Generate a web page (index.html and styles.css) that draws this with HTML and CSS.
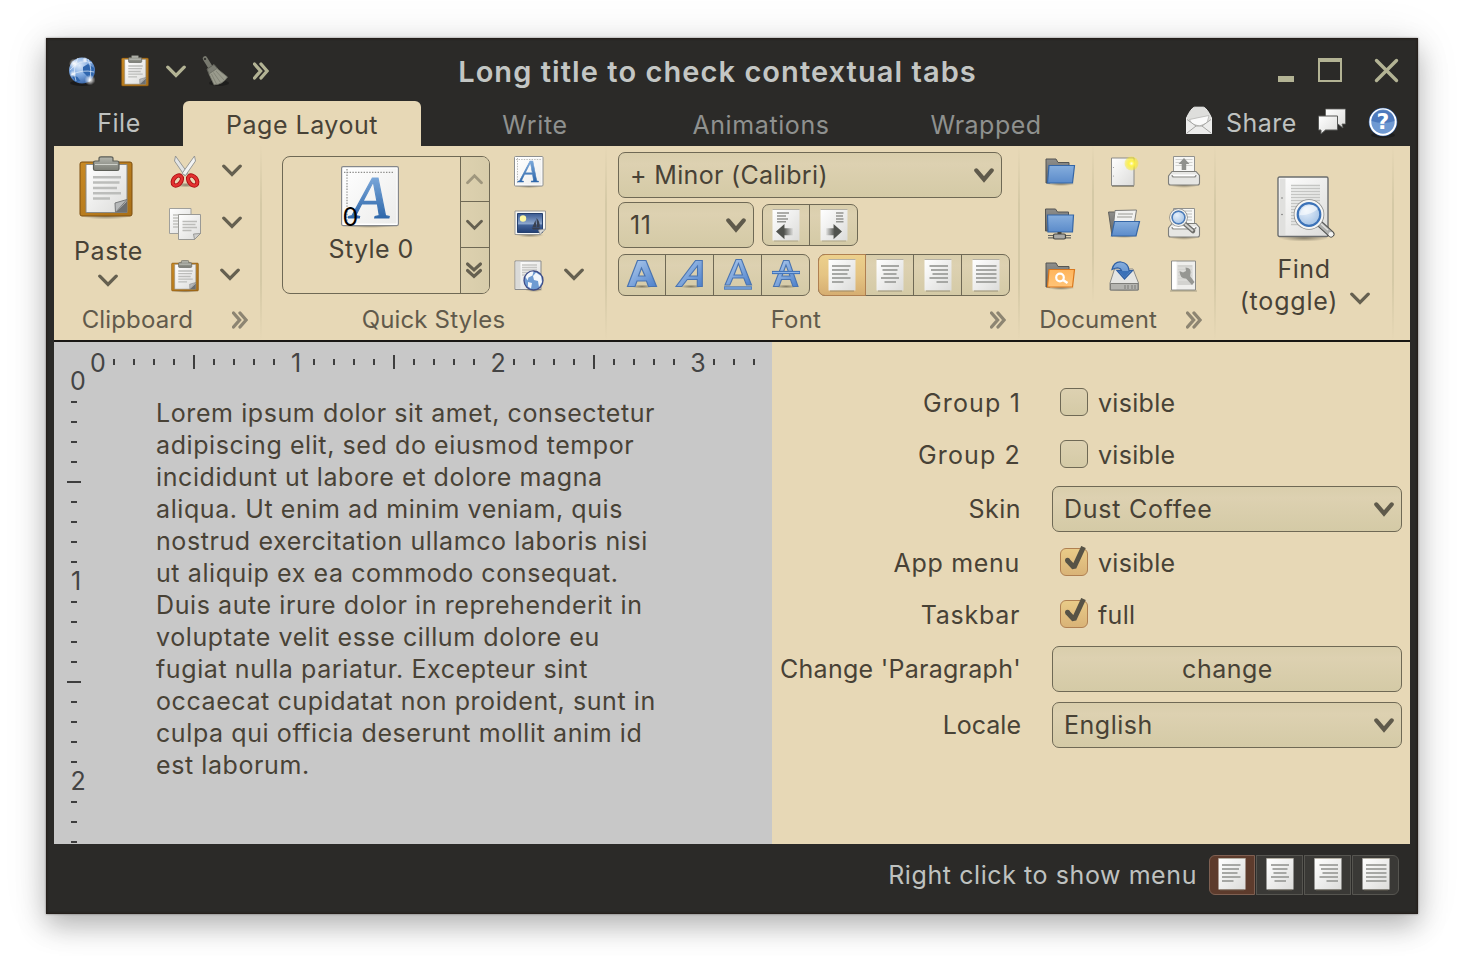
FILE: index.html
```html
<!DOCTYPE html>
<html lang="en">
<head>
<meta charset="utf-8">
<title>Long title to check contextual tabs</title>
<link rel="stylesheet" href="styles.css">
</head>
<body>
<svg class="defs" width="0" height="0" aria-hidden="true">
  <defs>
    <linearGradient id="gPaper" x1="0" y1="0" x2="1" y2="1"><stop offset="0" stop-color="#fff"/><stop offset="1" stop-color="#dcdcda"/></linearGradient>
    <linearGradient id="gWood" x1="0" y1="0" x2="1" y2="1"><stop offset="0" stop-color="#c98a24"/><stop offset="1" stop-color="#a86f18"/></linearGradient>
    <linearGradient id="gMetal" x1="0" y1="0" x2="0" y2="1"><stop offset="0" stop-color="#b4b6ae"/><stop offset="1" stop-color="#7c7e76"/></linearGradient>
    <linearGradient id="gBlue" x1="0" y1="0" x2="0" y2="1"><stop offset="0" stop-color="#86aedd"/><stop offset="1" stop-color="#5b8bca"/></linearGradient>
    <linearGradient id="gOrange" x1="0" y1="0" x2="0" y2="1"><stop offset="0" stop-color="#ffb55c"/><stop offset="1" stop-color="#ffc477"/></linearGradient>
    <linearGradient id="gGray" x1="0" y1="0" x2="0" y2="1"><stop offset="0" stop-color="#8e8e8b"/><stop offset="1" stop-color="#626260"/></linearGradient>
    <linearGradient id="gFontA" x1="0" y1="0" x2="1" y2="1"><stop offset="0" stop-color="#b5cfee"/><stop offset="1" stop-color="#4c80cb"/></linearGradient>
    <linearGradient id="gSea" x1="0" y1="0" x2="0" y2="1"><stop offset="0" stop-color="#3a5a92"/><stop offset=".55" stop-color="#8fa9cf"/><stop offset=".6" stop-color="#44659b"/><stop offset="1" stop-color="#233f74"/></linearGradient>
    <linearGradient id="gFadeL" x1="0" y1="0" x2="1" y2="0"><stop offset=".45" stop-color="#50524d"/><stop offset="1" stop-color="#50524d" stop-opacity="0"/></linearGradient>
    <linearGradient id="gFadeR" x1="0" y1="0" x2="1" y2="0"><stop offset="0" stop-color="#50524d" stop-opacity="0"/><stop offset=".55" stop-color="#50524d"/></linearGradient>
    <radialGradient id="gGlobe" cx=".4" cy=".3" r=".8"><stop offset="0" stop-color="#dbe9fa"/><stop offset=".5" stop-color="#7ba6de"/><stop offset="1" stop-color="#2a579c"/></radialGradient>
    <radialGradient id="gSun"><stop offset="0" stop-color="#fffde0"/><stop offset=".35" stop-color="#fff34a"/><stop offset="1" stop-color="#f7e81a" stop-opacity=".35"/></radialGradient>
    <radialGradient id="gGlow"><stop offset="0" stop-color="#fff"/><stop offset="1" stop-color="#fff" stop-opacity="0"/></radialGradient>
    <radialGradient id="gShade"><stop offset="0" stop-color="#3b382c" stop-opacity=".55"/><stop offset="1" stop-color="#3b382c" stop-opacity="0"/></radialGradient>
    <radialGradient id="gLens" cx=".4" cy=".35" r=".7"><stop offset="0" stop-color="#e7f0fa"/><stop offset="1" stop-color="#9bbce2"/></radialGradient>

    <symbol id="down" viewBox="0 0 20 13"><path d="M1.800 2.200 10 10.400 18.200 2.200" fill="none" stroke="currentColor" stroke-width="3.300" stroke-linecap="round"/></symbol>
    <symbol id="down-bold" viewBox="0 0 20 15"><path d="M2.300 2.400 10 11.400 17.700 2.400" fill="none" stroke="currentColor" stroke-width="4.200" stroke-linecap="round"/></symbol>
    <symbol id="more" viewBox="0 0 16 18"><path d="M1.500 2 7.600 9 1.500 16M8 2l6.100 7L8 16" fill="none" stroke="currentColor" stroke-width="3.300" stroke-linecap="round"/></symbol>

    <symbol id="clipboard" viewBox="0 0 54 64">
      <ellipse cx="27" cy="60" rx="25" ry="3.500" fill="url(#gShade)"/>
      <rect x="1" y="6" width="52" height="54" rx="2" fill="url(#gWood)" stroke="#7c4e10"/>
      <path d="M7 8.500h41v48H7z" fill="url(#gPaper)" stroke="#8a8a86"/>
      <path d="M48 45v11.500H36.500z" fill="#6d6f70"/><path d="M36.500 56.500 36 47l12-3.500z" fill="#b7b9ba" stroke="#77797a"/>
      <path d="M14 21.300h28M14 26.600h26.500M14 32h24M14 37.200h28M14 42.500h17" stroke="#bcbdbb" stroke-width="2.500"/>
      <path d="M20 5V2.500Q20 .8 22 .8h10q2 0 2 1.700V5h4q2 0 2 2v6q0 1.500-2 1.500H16.500q-2 0-2-1.500V7q0-2 2-2z" fill="url(#gMetal)" stroke="#5c5e57" stroke-width="1.200"/>
      <path d="M16 8.500h22.500" stroke="#cfd1ca" stroke-width="1"/>
    </symbol>

    <symbol id="globe" viewBox="0 0 32 32">
      <ellipse cx="16" cy="28" rx="12" ry="3" fill="#111" opacity=".6"/>
      <circle cx="16" cy="15.500" r="13" fill="url(#gGlobe)"/>
      <path d="M17 12l5-3 6 4-1 8-5 1-5-5z" fill="#2f66ae"/><path d="M5.500 20l6 2 3 4-5 1z" fill="#2f66ae"/>
      <path d="M4 15Q14 3 26 8M5 20Q16 14 28 17M12 3Q6 14 10 26M22 4Q27 14 23 27" fill="none" stroke="#e2edf9" stroke-width=".9" opacity=".8"/>
      <circle cx="8" cy="8.500" r="5" fill="url(#gGlow)"/><circle cx="7" cy="19" r="3.500" fill="url(#gGlow)"/><circle cx="24" cy="25" r="5.500" fill="url(#gGlow)"/><circle cx="19" cy="5" r="3" fill="url(#gGlow)"/>
    </symbol>

    <symbol id="broom" viewBox="0 0 28 32">
      <ellipse cx="18" cy="28" rx="10" ry="3" fill="#111" opacity=".5"/>
      <path d="M4 3.500 10.500 14" stroke="#77786e" stroke-width="4.600" stroke-linecap="round"/><circle cx="4" cy="4" r="1.100" fill="#292826"/>
      <path d="M6 14 13 9.500l3.500 4L8 19z" fill="#7d7e74" stroke="#5f6058"/>
      <path d="M8 19 16 13.500 26.500 22Q22 29.500 13 29.800Z" fill="#9a9b8d" stroke="#747569" stroke-width=".8"/>
      <path d="M10.500 19l5 10M12.500 17.500l7 10M15 16l8 9" stroke="#7c7d71" stroke-width=".8"/>
    </symbol>

    <symbol id="scissors" viewBox="0 0 30 34">
      <ellipse cx="16" cy="30" rx="10" ry="2.500" fill="url(#gShade)"/>
      <path d="M5.500 1 18 18.500l-3.500 2L4.500 6z" fill="#e3e5e5" stroke="#8d908f" stroke-width=".9"/>
      <path d="M24.500 1 12 18.500l3.500 2L25.500 6z" fill="#f2f3f3" stroke="#8d908f" stroke-width=".9"/>
      <ellipse cx="7.300" cy="25.500" rx="3.800" ry="5.600" transform="rotate(38 7.300 25.500)" fill="none" stroke="#a80f12" stroke-width="4.300"/>
      <ellipse cx="22.700" cy="25.500" rx="3.800" ry="5.600" transform="rotate(-38 22.700 25.500)" fill="none" stroke="#a80f12" stroke-width="4.300"/>
      <ellipse cx="7.300" cy="25.500" rx="3.800" ry="5.600" transform="rotate(38 7.300 25.500)" fill="none" stroke="#e33130" stroke-width="2.600"/>
      <ellipse cx="22.700" cy="25.500" rx="3.800" ry="5.600" transform="rotate(-38 22.700 25.500)" fill="none" stroke="#e33130" stroke-width="2.600"/>
    </symbol>

    <symbol id="copy" viewBox="0 0 32 32">
      <path d="M.5.500h21.500v25H.5z" fill="url(#gPaper)" stroke="#a0a09c"/>
      <path d="M4 7h14M4 10h14M4 13h14M4 16h14M4 19h14" stroke="#c2c2bf" stroke-width="1.600"/>
      <path d="M9.500 6.500h22v19l-6 6h-16z" fill="url(#gPaper)" stroke="#999995"/>
      <path d="M31.500 25.500l-7 .5 1 5.500z" fill="#cfcfcd" stroke="#8b8b88" stroke-width=".8"/>
      <path d="M13.500 13.500h14.500M13.500 16.500h13M13.500 19.500h14.500M13.500 22.500h9" stroke="#bcbcb9" stroke-width="1.500"/>
    </symbol>

    <symbol id="style" viewBox="0 0 58 62">
      <ellipse cx="29" cy="59.500" rx="27" ry="2.500" fill="url(#gShade)"/>
      <rect x=".6" y=".6" width="56.800" height="59" rx="1.500" fill="#fff" stroke="#85878a" stroke-width="1.200"/>
      <path d="M2.500 2.500h53v55h-53z" fill="url(#gPaper)" opacity=".55"/>
      <path d="M3 6.300h49M6 3v53" stroke="#8e8e8c" stroke-width="1.200" stroke-dasharray="1.400 1.400"/>
    </symbol>
    <symbol id="style-small" viewBox="0 0 30 32">
      <ellipse cx="15" cy="30.500" rx="14" ry="1.500" fill="url(#gShade)"/>
      <rect x=".5" y=".5" width="28.500" height="29.500" rx="1" fill="#fff" stroke="#8d8f90"/>
      <path d="M2 2h25.500v26.500H2z" fill="url(#gPaper)" opacity=".5"/>
      <path d="M2 3.500h25M3.500 2v25" stroke="#b9b9b6" stroke-dasharray="1.400 1.200"/>
    </symbol>

    <symbol id="picture" viewBox="0 0 32 28">
      <ellipse cx="16" cy="25" rx="14" ry="2.500" fill="url(#gShade)"/>
      <path d="M1 1h30.500v18l-5 5.500H1z" fill="#f7f7f5" stroke="#9a9a96"/>
      <path d="M3.500 3.500h25v19h-25z" fill="url(#gSea)" stroke="#26416f"/>
      <circle cx="9" cy="8.500" r="3.200" fill="#fdf7a2"/>
      <path d="M21.500 10l-3 7h4zM22.500 8q4 4 3 9h-2.500zM17.500 17.500h9l-1.500 2h-6z" fill="#3a4150"/>
      <path d="M31.500 19l-7 1 1.500 4.500z" fill="#d9d9d6" stroke="#979793" stroke-width=".7"/>
    </symbol>

    <symbol id="webdoc" viewBox="0 0 31 32">
      <path d="M1 1h26v28.500H1z" fill="url(#gPaper)" stroke="#8a8b8b"/><path d="M1.700 1.700h4.800v27H1.700z" fill="#dadad8"/>
      <path d="M8 5h15M8 7.500h15M8 10h15M8 12.500h10M8 15h6" stroke="#c6c6c4" stroke-width="1.400"/>
      <ellipse cx="20" cy="30" rx="9" ry="2" fill="url(#gShade)"/>
      <circle cx="19.500" cy="20.500" r="9.500" fill="#6f9bd2" stroke="#3f4c86" stroke-width="1.300"/>
      <path d="M11.500 17q3-6 8-5.500l-1 4-4 2-1 3zM22 12.500l5 3.500 1 6-3 5-1-6-4-1-1-4zM14 22l4 1-1 5.500-3-2z" fill="#f3f6fa"/>
    </symbol>

    <symbol id="outdent" viewBox="0 0 30 34">
      <path d="M1.500 1.500h27v31h-27z" fill="url(#gPaper)"/><path d="M1.500 1.500h27" stroke="#b4b0a4"/><path d="M3 33h24" stroke="#8a846f" opacity=".5"/>
      <path d="M6 5h12M6 8h9M6 11h11M6 13.700h9" stroke="#92938f" stroke-width="1.400"/>
      <path d="M5 23.500 13.500 16v4.300h9v7h-9v4z" fill="url(#gFadeL)"/>
    </symbol>
    <symbol id="indent" viewBox="0 0 30 34">
      <path d="M1.500 1.500h27v31h-27z" fill="url(#gPaper)"/><path d="M1.500 1.500h27" stroke="#b4b0a4"/><path d="M3 33h24" stroke="#8a846f" opacity=".5"/>
      <path d="M17 5h7.500M17 8h7M17 11h7.500M17 13.700h7.500" stroke="#92938f" stroke-width="1.400"/>
      <path d="M23 23.500 14.500 16v4.300h-8v7h8v4z" fill="url(#gFadeR)"/>
    </symbol>

    <symbol id="bold" viewBox="0 0 32 30">
      <ellipse cx="16" cy="27.500" rx="11" ry="2" fill="url(#gShade)"/>
      <path fill-rule="evenodd" d="M11.500 1.500h8.500l10.500 26h-8l-2-5.500H11l-2 5.500H1.500zM15.500 9l-3 8h6.500z" fill="url(#gFontA)" stroke="#4a74b0" stroke-width="1.200"/>
    </symbol>
    <symbol id="italic" viewBox="0 0 32 30">
      <ellipse cx="17" cy="27.500" rx="11" ry="2" fill="url(#gShade)"/>
      <path fill-rule="evenodd" d="M21.500 1.500h6.800v26h-5v-7h-10l-5.500 7H2zM23.500 7 15.500 17h8z" fill="url(#gFontA)" stroke="#4a74b0" stroke-width="1.100"/>
    </symbol>
    <symbol id="underline" viewBox="0 0 32 34">
      <path fill-rule="evenodd" d="M14 1.500h5.500l10 25.500H24.500l-2.700-7h-11l-3 7H3zM16.500 5.500l-4.500 11.500h8.500z" fill="url(#gFontA)" stroke="#4a74b0" stroke-width="1.100"/>
      <path d="M2 30h28" stroke="#386bb3" stroke-width="3.200"/><path d="M2.500 30h27" stroke="#8fb5e6" stroke-width="1.300"/>
    </symbol>
    <symbol id="strike" viewBox="0 0 32 30">
      <ellipse cx="16" cy="27.500" rx="11" ry="2" fill="url(#gShade)"/>
      <path fill-rule="evenodd" d="M13.500 1.500h5.500l9 26h-5l-2.500-7h-9l-2.500 7H3.500zM16 6l-4 11h8z" fill="url(#gFontA)" stroke="#4a74b0" stroke-width="1.100"/>
      <path d="M2 13.500h28" stroke="#386bb3" stroke-width="3.200"/><path d="M2.500 13.500h27" stroke="#8fb5e6" stroke-width="1.300"/>
    </symbol>

    <symbol id="page" viewBox="0 0 30 34">
      <path d="M1.500 1.500h27v31h-27z" fill="url(#gPaper)"/><path d="M1.500 1.500h27" stroke="#b4b0a4"/><path d="M3 33h24" stroke="#77715e" opacity=".6"/>
    </symbol>
    <symbol id="left" viewBox="0 0 30 34"><use href="#page" width="30" height="34"/><path d="M5 8h18.500M5 12h17M5 16h15.500M5 20h18.500M5 24h11.500" stroke="#a6a7a4" stroke-width="1.800"/></symbol>
    <symbol id="center" viewBox="0 0 30 34"><use href="#page" width="30" height="34"/><path d="M6 8h18M7.500 12h15M8.500 16h13M6 20h18M9.500 24h11.500" stroke="#a6a7a4" stroke-width="1.800"/></symbol>
    <symbol id="right" viewBox="0 0 30 34"><use href="#page" width="30" height="34"/><path d="M6.500 8H25M8 12h17M9.500 16H25M6.500 20H25M13.500 24H25" stroke="#a6a7a4" stroke-width="1.800"/></symbol>
    <symbol id="justify" viewBox="0 0 30 34"><use href="#page" width="30" height="34"/><path d="M5 8h20.500M5 12h20.500M5 16h20.500M5 20h20.500M5 24h20.500" stroke="#a6a7a4" stroke-width="1.800"/></symbol>

    <symbol id="folder" viewBox="0 0 32 32">
      <ellipse cx="17" cy="28" rx="14" ry="2" fill="url(#gShade)"/>
      <path d="M2 27V3h10l2 3.500h11V12L6 27z" fill="url(#gGray)" stroke="#555552"/>
      <path d="M5 9.500h25.500L28.500 27H3.500z" fill="url(#gBlue)" stroke="#3566a6" stroke-width="1.200"/>
    </symbol>
    <symbol id="folder-net" viewBox="0 0 32 34">
      <path d="M1.500 24V2h10l2 3h11v7L6 24z" fill="url(#gGray)" stroke="#555552"/>
      <path d="M3.500 8h26L28.500 25H4z" fill="url(#gBlue)" stroke="#3566a6" stroke-width="1.200"/>
      <path d="M4 28.500h7M20 28.500h7M4 30.800h7M20 30.800h7" stroke="#666763" stroke-width="1.200"/>
      <rect x="9.500" y="27" width="12" height="5" rx="1.500" fill="#aaaaa6" stroke="#444541" stroke-width="1.200"/><path d="M15.500 25v2" stroke="#444541" stroke-width="4"/>
    </symbol>
    <symbol id="folder-search" viewBox="0 0 32 32">
      <ellipse cx="17" cy="28" rx="14" ry="2" fill="url(#gShade)"/>
      <path d="M2 27V3h10l2 3.500h11V12L6 27z" fill="url(#gGray)" stroke="#555552"/>
      <path d="M5 9.500h25.500L28.500 27H3.500z" fill="url(#gOrange)" stroke="#d9771c" stroke-width="1.200"/>
      <circle cx="16" cy="17.500" r="3.800" fill="none" stroke="#fff" stroke-width="2.200"/><path d="M19 20l4.500 3" stroke="#fff" stroke-width="2.400"/>
    </symbol>
    <symbol id="new" viewBox="0 0 32 32">
      <path d="M3.500 2h22.500v27.500H3.500z" fill="url(#gPaper)" stroke="#8a8a87"/><path d="M4 30.500h22" stroke="#6b6653" opacity=".6"/>
      <circle cx="5.500" cy="11.500" r=".6" fill="#999"/><circle cx="5.500" cy="20" r=".6" fill="#999"/>
      <circle cx="23.500" cy="7.500" r="7" fill="url(#gSun)"/>
    </symbol>
    <symbol id="open" viewBox="0 0 34 32">
      <ellipse cx="17" cy="28" rx="14" ry="2" fill="url(#gShade)"/>
      <path d="M1.500 4h6l1 3H27v8L5 28z" fill="url(#gGray)" stroke="#60605d"/>
      <path d="M8 2.500 29.500 2 27 17 6 22z" fill="#f1f1ef" stroke="#7c7c79"/><path d="M11 6h15M10 9h15" stroke="#b6b6b3" stroke-width="1.400"/>
      <path d="M7.500 13.500h25L29 28H4.500z" fill="url(#gBlue)" stroke="#3566a6" stroke-width="1.200"/>
    </symbol>
    <symbol id="save" viewBox="0 0 32 32">
      <ellipse cx="16" cy="29.500" rx="15" ry="2" fill="url(#gShade)"/>
      <path d="M6.500 9h18.500l5.500 14v7H2v-7z" fill="#e5e5e2" stroke="#8a8a86"/><path d="M2.500 23.500h27.500V30H2.500z" fill="#b4b4b0" stroke="#7d7d79"/>
      <path d="M17 25v4M20 25v4M24 25v4M27 25v4" stroke="#7b7b77"/>
      <path d="M4 9.500Q6 1.500 13 2q7.500 1 8 8.500h3.500L16.500 19 9 10.500h4.500Q12 6 4 9.500z" fill="url(#gBlue)" stroke="#2f5fa3" stroke-width="1.200"/>
      <path d="M10.500 11h12l-6 6.800z" fill="#3a70b8"/>
    </symbol>
    <symbol id="printer" viewBox="0 0 34 34">
      <ellipse cx="17" cy="30" rx="15" ry="3" fill="url(#gShade)"/>
      <path d="M6.500 1.500h21V18h-21z" fill="#f7f7f5" stroke="#92928e"/>
      <path d="M5 16.500h24l3.500 4V28q0 2-2 2h-27q-2 0-2-2v-7z" fill="#e6e6e3" stroke="#7f7f7b" stroke-width="1.100"/>
      <path d="M3.500 20.500h27" stroke="#fff" stroke-width="2"/><path d="M5 20q0 2 2 2h20q2 0 2-2" fill="none" stroke="#8d8d89" stroke-width="1.200"/>
    </symbol>
    <symbol id="print" viewBox="0 0 34 34"><use href="#printer" width="34" height="34"/><path d="M8.500 4.500h17M8.500 7.500h17M8.500 10.500h17" stroke="#d2d2cf"/><path d="M17 3l5.500 6h-3.300v6h-4.500V9H11.500z" fill="#8f908d"/></symbol>
    <symbol id="preview" viewBox="0 0 34 34"><use href="#printer" width="34" height="34"/><path d="M18 4h7M19 7h6M19 10h6M19 13h6" stroke="#bdbdba"/>
      <path d="M17.500 16.500 26 24" stroke="#6c6c69" stroke-width="4.600" stroke-linecap="round"/><path d="M18 17l8 7" stroke="#d0d0cd" stroke-width="2"/>
      <circle cx="11.500" cy="10.500" r="7.800" fill="url(#gLens)" stroke="#8b8c8a" stroke-width="3"/><circle cx="11.500" cy="10.500" r="7.800" fill="none" stroke="#f3f3f1" stroke-width="1.500"/><circle cx="11.500" cy="10.500" r="6.300" fill="none" stroke="#4a7cbc" stroke-width="1.400"/></symbol>
    <symbol id="props" viewBox="0 0 34 34">
      <path d="M4.500 2h24v29h-24z" fill="#efefed" stroke="#8a8b87"/><path d="M5.200 2.700h4.300v27.500H5.200z" fill="#fff"/><path d="M3 32h27" stroke="#6b6653" opacity=".5"/>
      <path d="M10.500 6h15v20h-15z" fill="#d3d3d0"/><path d="M10.500 9h15M10.500 12h15M10.500 15h15M10.500 18h15M10.500 21h15" stroke="#e3e3e0"/>
      <path d="M12.500 12l3.500 1.500 3-1.500-.5-3.500q6 0 5 6l-.5 2.500 4.500 6-2.500 3-6-6.500q-6 .5-6.500-7.500z" fill="#969793"/>
    </symbol>
    <symbol id="find" viewBox="0 0 60 66">
      <ellipse cx="27" cy="62" rx="25" ry="3.500" fill="url(#gShade)"/>
      <rect x="1" y="1" width="50" height="59.500" rx="1.500" fill="url(#gPaper)" stroke="#6b6d6e" stroke-width="1.400"/><path d="M2.500 2.500h6v56.500h-6z" fill="#e0e0de"/>
      <circle cx="5" cy="22" r=".8" fill="#777"/><circle cx="5" cy="38.500" r=".8" fill="#777"/>
      <path d="M14 9.500h29M14 12.500h29M14 15.500h29M14 18.500h29M14 21.500h29M14 24.500h29M14 27.500h29M14 30.500h29M14 33.500h29M14 36.500h29M14 39.500h20M14 42.500h29M14 45.500h11M14 48.500h10" stroke="#c4c5c3" stroke-width="1.600"/>
      <path d="M43 48 54 58" stroke="#515250" stroke-width="7" stroke-linecap="round"/><path d="M43 48 54 58" stroke="#b0b1af" stroke-width="4.800" stroke-linecap="round"/><circle cx="54" cy="58.300" r="2.400" fill="#f4f4f3"/><path d="M42.500 46.500 51 54" stroke="#e2e2e0" stroke-width="1.400"/>
      <circle cx="32" cy="38.500" r="13" fill="url(#gLens)" stroke="#8b8c8b" stroke-width="4.600"/><circle cx="32" cy="38.500" r="13" fill="none" stroke="#f6f6f5" stroke-width="3"/>
      <circle cx="32" cy="38.500" r="11.300" fill="none" stroke="#3b72b8" stroke-width="2.200"/><path d="M22.500 39Q25 29 34 29q5 0 7 4-9 7-18.500 6z" fill="#fff" opacity=".55"/>
    </symbol>
    <symbol id="mail" viewBox="0 0 28 30">
      <path d="M1.500 12Q6 2 9.500 1.200h9Q22 2 26.500 12v15.500h-25z" fill="#dededc" stroke="#efefee"/>
      <path d="M4.500 13.500 14 11.500 24 9.500 22 17 14.500 20 7 18z" fill="#fafafa" stroke="#b5b5b3" stroke-width=".8"/>
      <path d="M1.500 13 11 20h6l9.500-7v14.500h-25z" fill="#ececeb"/><path d="M2 27 11 20h6l9 7M2 13.500l9 6.500M17 20l9-6.500" fill="none" stroke="#a5a5a3" stroke-width="1"/>
    </symbol>
    <symbol id="chat" viewBox="0 0 30 28">
      <path d="M8.500 1h20v15h-3.500l1 4-5-4H8.500z" fill="url(#gPaper)" stroke="#5d5e5c" stroke-width=".8"/>
      <path d="M1.500 8h19v14h-12L4 26v-4H1.500z" fill="url(#gPaper)" stroke="#585957" stroke-width="1"/>
    </symbol>
    <symbol id="help" viewBox="0 0 30 32">
      <ellipse cx="15" cy="28" rx="12" ry="3" fill="#111" opacity=".5"/>
      <circle cx="15" cy="15" r="14.300" fill="#2d5da3"/><circle cx="15" cy="15" r="12.700" fill="#6f99d2" stroke="#fff" stroke-width="2"/><path d="M3.500 14a11.500 11.500 0 0 1 23 0q-11 4-23 0z" fill="#406fb5" opacity=".75"/>
    </symbol>
    <symbol id="check" viewBox="0 0 28 30"><path d="M7.500 14.500 14 21.500 23.500 1" fill="none" stroke="#575346" stroke-width="5" stroke-linejoin="bevel"/><circle cx="7.500" cy="14.300" r="2.500" fill="#575346"/></symbol>
  </defs>
</svg>

<main class="window">
  <header class="titlebar">
    <div class="taskbar">
      <svg class="tb-globe"><use href="#globe"/></svg>
      <svg class="tb-clip"><use href="#clipboard"/></svg>
      <svg class="chev tb-chev"><use href="#down"/></svg>
      <svg class="tb-broom"><use href="#broom"/></svg>
      <svg class="more tb-more"><use href="#more"/></svg>
    </div>
    <h1 class="title">Long title to check contextual tabs</h1>
    <div class="controls">
      <svg width="122" height="30" viewBox="0 0 122 30"><path d="M0 20h16v6H0z" fill="#b3b394"/><path d="M41 3v22h22V3z" fill="none" stroke="#b3b394" stroke-width="2"/><path d="M40 2h24v4H40z" fill="#b3b394"/><path d="M98.500 4.500 118.500 24.500M118.500 4.500 98.500 24.500" stroke="#b3b394" stroke-width="3.400" stroke-linecap="round"/></svg>
    </div>
  </header>

  <nav class="tabs">
    <span class="file">File</span>
    <span class="tab tab-active">Page Layout</span>
    <span class="tab tab-write">Write</span>
    <span class="tab tab-anim">Animations</span>
    <span class="tab tab-wrap">Wrapped</span>
    <div class="anchored">
      <svg class="mail" width="28" height="30"><use href="#mail"/></svg>
      <span class="share">Share</span>
      <svg class="chat" width="30" height="28"><use href="#chat"/></svg>
      <span class="help"><svg width="30" height="32"><use href="#help"/></svg><b>?</b></span>
    </div>
  </nav>

  <section class="ribbon">
    <div class="band clipboard">
      <div class="band-body">
        <div class="paste"><svg width="54" height="64"><use href="#clipboard"/></svg><span>Paste</span><svg class="chev"><use href="#down"/></svg></div>
        <div class="clip-grid">
          <svg width="30" height="34"><use href="#scissors"/></svg><svg class="chev up"><use href="#down"/></svg>
          <svg width="32" height="32"><use href="#copy"/></svg><svg class="chev up"><use href="#down"/></svg>
          <svg width="28" height="33"><use href="#clipboard"/></svg><svg class="chev up back"><use href="#down"/></svg>
        </div>
      </div>
      <div class="band-title"><span>Clipboard</span><svg class="more"><use href="#more"/></svg></div>
    </div>

    <div class="band styles">
      <div class="band-body">
        <div class="gallery">
          <div class="gallery-item">
            <div class="style-icon"><svg width="58" height="62"><use href="#style"/></svg><i>A</i><b>0</b></div>
            <span>Style 0</span>
          </div>
          <div class="gallery-nav">
            <span class="dim"><svg class="nav-chev flip"><use href="#down"/></svg></span>
            <span><svg class="nav-chev"><use href="#down"/></svg></span>
            <span class="nav-double"><svg width="16" height="18" viewBox="0 0 16 18"><path d="M1.500 2 8 8l6.500-6M1.500 8.500l6.500 6 6.500-6" fill="none" stroke="currentColor" stroke-width="3.100" stroke-linecap="round"/></svg></span>
          </div>
        </div>
        <div class="style-grid">
          <div class="mini-style"><svg width="30" height="32"><use href="#style-small"/></svg><i>A</i></div>
          <svg width="32" height="28"><use href="#picture"/></svg>
          <svg width="31" height="32"><use href="#webdoc"/></svg>
        </div>
        <svg class="chev web-chev"><use href="#down"/></svg>
      </div>
      <div class="band-title"><span>Quick Styles</span></div>
    </div>

    <div class="band font">
      <div class="band-body font-body">
        <div class="combo"><span class="family">+ Minor (Calibri)</span><svg class="chev-bold"><use href="#down-bold"/></svg></div>
        <div class="font-row">
          <div class="combo size"><span>11</span><svg class="chev-bold"><use href="#down-bold"/></svg></div>
          <div class="strip"><span><svg class="ico"><use href="#outdent"/></svg></span><span><svg class="ico"><use href="#indent"/></svg></span></div>
        </div>
        <div class="font-row">
          <div class="strip letters"><span><svg><use href="#bold"/></svg></span><span><svg><use href="#italic"/></svg></span><span><svg class="under"><use href="#underline"/></svg></span><span><svg><use href="#strike"/></svg></span></div>
          <div class="strip"><span class="selected"><svg class="ico"><use href="#left"/></svg></span><span><svg class="ico"><use href="#center"/></svg></span><span><svg class="ico"><use href="#right"/></svg></span><span><svg class="ico"><use href="#justify"/></svg></span></div>
        </div>
      </div>
      <div class="band-title"><span>Font</span><svg class="more"><use href="#more"/></svg></div>
    </div>

    <div class="band document">
      <div class="band-body">
        <div class="doc-col first">
          <svg width="32" height="32"><use href="#folder"/></svg>
          <svg width="32" height="34"><use href="#folder-net"/></svg>
          <svg width="32" height="32"><use href="#folder-search"/></svg>
        </div>
        <div class="doc-grid">
          <svg width="32" height="32"><use href="#new"/></svg><svg width="34" height="34"><use href="#print"/></svg>
          <svg width="34" height="32"><use href="#open"/></svg><svg width="34" height="34"><use href="#preview"/></svg>
          <svg width="32" height="32"><use href="#save"/></svg><svg width="34" height="34"><use href="#props"/></svg>
        </div>
      </div>
      <div class="band-title"><span>Document</span><svg class="more"><use href="#more"/></svg></div>
    </div>

    <div class="band find">
      <svg width="60" height="66"><use href="#find"/></svg>
      <span class="find-text">Find</span>
      <span class="find-toggle"><span>(toggle)</span><svg class="chev"><use href="#down"/></svg></span>
    </div>
  </section>

  <section class="content">
    <div class="editor">
      <svg class="rulers" width="718" height="502" viewBox="54 342 718 502">
        <defs>
          <pattern id="hMinor" x="113" y="359" width="20" height="6" patternUnits="userSpaceOnUse"><path d="M0 0h2v6H0z" fill="#3e3e3e"/></pattern>
          <pattern id="vMinor" x="71" y="401" width="6" height="20" patternUnits="userSpaceOnUse"><path d="M0 0h6v2H0z" fill="#3e3e3e"/></pattern>
        </defs>
        <g fill="url(#hMinor)"><path d="M113 359h70v6h-70zM213 359h70v6h-70zM313 359h70v6h-70zM413 359h70v6h-70zM513 359h70v6h-70zM613 359h70v6h-70zM713 359h50v6h-50z"/></g>
        <path d="M193 355h2v14h-2zM393 355h2v14h-2zM593 355h2v14h-2z" fill="#3e3e3e"/>
        <g fill="url(#vMinor)"><path d="M71 401h6v70h-6zM71 501h6v70h-6zM71 601h6v70h-6zM71 701h6v70h-6zM71 801h6v43h-6z"/></g>
        <path d="M67 481h14v2H67zM67 681h14v2H67z" fill="#3e3e3e"/>
        <g class="ruler-num"><text x="98" y="372">0</text><text x="296" y="372">1</text><text x="498" y="372">2</text><text x="698" y="372">3</text><text x="78" y="390">0</text><text x="76" y="590">1</text><text x="78" y="790">2</text></g>
      </svg>
      <p class="lorem">Lorem ipsum dolor sit amet, consectetur<br>adipiscing elit, sed do eiusmod tempor<br>incididunt ut labore et dolore magna<br>aliqua. Ut enim ad minim veniam, quis<br>nostrud exercitation ullamco laboris nisi<br>ut aliquip ex ea commodo consequat.<br>Duis aute irure dolor in reprehenderit in<br>voluptate velit esse cillum dolore eu<br>fugiat nulla pariatur. Excepteur sint<br>occaecat cupidatat non proident, sunt in<br>culpa qui officia deserunt mollit anim id<br>est laborum.</p>
    </div>
    <div class="form">
      <span class="label wide">Group 1</span><div class="check"><span class="box"></span>visible</div>
      <span class="label wide">Group 2</span><div class="check"><span class="box"></span>visible</div>
      <span class="label">Skin</span><div class="combo skin"><span>Dust Coffee</span><svg class="chev-bold"><use href="#down-bold"/></svg></div>
      <span class="label app">App menu</span><div class="check"><span class="box on"><svg><use href="#check"/></svg></span>visible</div>
      <span class="label app">Taskbar</span><div class="check"><span class="box on"><svg><use href="#check"/></svg></span>full</div>
      <span class="label narrow">Change 'Paragraph'</span><div class="combo button"><span>change</span></div>
      <span class="label locale">Locale</span><div class="combo"><span>English</span><svg class="chev-bold"><use href="#down-bold"/></svg></div>
    </div>
  </section>

  <footer class="status">
    <span>Right click to show menu</span>
    <div class="dark-strip"><span class="selected"><svg class="ico"><use href="#left"/></svg></span><span><svg class="ico"><use href="#center"/></svg></span><span><svg class="ico"><use href="#right"/></svg></span><span><svg class="ico"><use href="#justify"/></svg></span></div>
  </footer>
</main>
</body>
</html>
```
FILE: styles.css
```css
* { box-sizing: border-box; }
body {
  margin: 0;
  width: 1464px;
  height: 968px;
  padding: 38px 46px 54px;
  overflow: hidden;
  background: #fff;
  font: 25px/32px Inter, "Liberation Sans", sans-serif;
  letter-spacing: 0.5px;
  color: #484236;
}
svg { display: block; flex: none; }
.defs { position: absolute; }
.window {
  width: 1372px;
  height: 876px;
  padding: 0 8px;
  background: #2b2a28;
  box-shadow: inset 0 0 2px 1px #241c18, 0 0 2px rgba(0, 0, 0, .45), 0 12px 26px rgba(0, 0, 0, .26), 0 2px 44px rgba(0, 0, 0, .09);
}
.chev { width: 20px; height: 13px; color: #656050; }
.chev-bold { width: 20px; height: 15px; color: #5f5a4b; }
.more { width: 16px; height: 18px; color: #8d8572; }

.titlebar { display: flex; align-items: center; height: 60px; padding: 6px 10px 0 12px; }
.taskbar { display: flex; align-items: center; width: 204px; }
.tb-globe { width: 32px; height: 32px; }
.tb-clip { width: 28px; height: 33px; margin-left: 23px; }
.tb-chev { margin-left: 17px; color: #b3b394; }
.tb-broom { width: 28px; height: 32px; margin-left: 15px; }
.tb-more { margin-left: 24px; color: #b3b394; }
.title { flex: 1; margin: 0; padding: 2px 113px 0 0; text-align: center; font-size: 29px; font-weight: 600; letter-spacing: 1.07px; white-space: nowrap; color: #c3c6c4; }
.controls { flex: none; width: 122px; }

.tabs { display: flex; height: 48px; padding-top: 3px; color: #bfc2c0; }
.file { width: 129px; padding: 6px 0 0 1px; text-align: center; }
.tab { padding-top: 8px; text-align: center; color: #8f918f; }
.tab-active { width: 238px; background: #e7d8b6; border-radius: 6px 6px 0 0; color: #484236; }
.tab-write { width: 228px; letter-spacing: .7px; }
.tab-anim { width: 224px; letter-spacing: .6px; }
.tab-wrap { width: 226px; }
.anchored { display: flex; align-items: center; margin-left: auto; padding: 0 12px 4px 0; }
.mail { margin-bottom: 2px; }
.share { margin: 2px 0 0 13px; width: 91px; }
.help { position: relative; margin: 2px 0 0 21px; }
.help b { position: absolute; left: 0; top: -1px; width: 30px; text-align: center; font: 700 22px/32px "DejaVu Sans", sans-serif; color: #fff; letter-spacing: 0; }

.ribbon { display: flex; height: 196px; background: #e7d8b6; border-bottom: 2px solid #191714; }
.band { display: flex; flex-direction: column; border-right: 2px solid; border-image: linear-gradient(#e7d8b6, #d5c9a6 30%, #d5c9a6 70%, #e7d8b6) 1; }
.band-body { display: flex; height: 158px; }
.band-title { display: flex; align-items: center; justify-content: center; height: 32px; color: #615a4b; font-size: 24px; letter-spacing: .15px; }

.clipboard { width: 208px; }
.paste { width: 108px; display: flex; flex-direction: column; align-items: center; padding: 10px 4px 0 0; }
.paste span { margin: 15px 0 7px; padding-left: 5px; letter-spacing: .7px; }
.paste .chev { margin-left: 4px; }
.clip-grid { display: grid; grid-template: 52px 52px 52px / 46px 44px; justify-items: center; align-items: center; column-gap: 1px; }
.clip-grid svg:nth-child(even) { margin: 0 0 4px 2px; }
.clip-grid svg.back { margin-left: -2px; }
.clipboard .band-title { justify-content: flex-end; padding-right: 12px; }
.clipboard .band-title .more { margin-left: 39px; }

.styles { width: 345px; }
.gallery { display: flex; width: 208px; height: 138px; margin: 10px 0 0 20px; border: 1px solid #6f6955; border-radius: 8px; overflow: hidden; }
.gallery-item { flex: 1; display: flex; flex-direction: column; align-items: center; padding: 9px 4px 0 0; }
.gallery-item > span { margin: 5px 0 0 3px; letter-spacing: .4px; }
.style-icon, .mini-style { position: relative; }
.style-icon i, .mini-style i { position: absolute; left: 7px; top: 1px; width: 46px; font: italic 61px/62px "Liberation Serif", serif; letter-spacing: 0; text-align: center; color: transparent; background: linear-gradient(#7ba8da 15%, #2a64a8 85%); background-clip: text; -webkit-background-clip: text; -webkit-text-stroke: 1.2px transparent; }
.mini-style i { left: 3px; top: 0; width: 24px; font-size: 31px; line-height: 31px; -webkit-text-stroke-width: .6px; }
.style-icon b { position: absolute; left: 2px; bottom: -5px; font-weight: 400; font-size: 25px; color: #000; letter-spacing: 0; }
.gallery-nav { width: 29px; border-left: 1px solid #6f6955; display: grid; grid-template-rows: 44px 46px 46px; background: linear-gradient(90deg, #ddd1af, #d7ccaa); color: #656050; }
.gallery-nav span { display: flex; align-items: center; justify-content: center; padding-right: 2px; }
.gallery-nav span + span { border-top: 1px solid #6f6955; }
.nav-chev { width: 17px; height: 12px; }
.flip { transform: rotate(180deg); }
.dim .nav-chev { opacity: .5; }
.style-grid { display: grid; grid-template-rows: 52px 52px 52px; align-items: center; justify-items: start; margin-left: 24px; width: 49px; }
.web-chev { margin: 122px 0 0 1px; }

.font { width: 413px; padding-left: 11px; margin-left: 0; }
.font-body { flex-direction: column; padding-top: 6px; }
.font-row { display: flex; align-items: center; gap: 8px; height: 46px; margin-top: 4px; }
.combo { display: flex; align-items: center; justify-content: space-between; height: 46px; padding: 0 7px 0 11px; border: 1px solid #6f6955; border-radius: 7px; background: linear-gradient(#d9ceac, #ddd1b1 25%, #d4caa6); }
.family { letter-spacing: .33px; }
.skin { letter-spacing: .75px; }
.font .combo { width: 384px; }
.font .size { width: 136px; }
.strip { display: flex; height: 42px; border: 1px solid #6f6955; border-radius: 7px; background: linear-gradient(#d9ceac, #ddd1b1 25%, #d4caa6); }
.strip span { width: 48px; display: flex; align-items: center; justify-content: center; border-left: 1px solid #6f6955; }
.strip span:first-child { width: 46px; border-left: 0; padding: 0; }
.font-row:last-child { align-items: flex-start; margin-top: 6px; }
.strip .selected:first-child { width: 48px; height: 42px; margin: -1px -1px 0 -1px; border: 1px solid #b08051; border-radius: 7px 0 0 7px; background: linear-gradient(#ecd08c, #e5c483 50%, #d6ae71); }
.strip .selected + span { border-left-color: #b08051; }
.ico { width: 30px; height: 34px; margin-bottom: 1px; }
.letters svg { width: 32px; height: 30px; margin-bottom: 3px; }
.letters .under { height: 34px; margin: 0; }
.font .band-title { justify-content: flex-end; padding-right: 12px; }
.font .band-title .more { margin-left: 169px; }

.document { width: 196px; }
.doc-col { width: 75px; height: 156px; display: grid; grid-template-rows: 52px 52px 52px; align-items: center; padding-left: 24px; border-right: 2px solid; border-image: linear-gradient(#e7d8b6, #d5c9a6 30%, #d5c9a6 70%, #e7d8b6) 1; }
.doc-grid { display: grid; grid-template: 52px 52px 52px / 60px 60px; justify-items: center; align-items: center; }
.document .band-title { justify-content: flex-end; padding-right: 12px; }
.document .band-title .more { margin-left: 29px; }

.find { width: 178px; align-items: center; padding-top: 30px; }
.find > svg { margin-left: 6px; }
.find-text { margin-top: 11px; }
.find-toggle { display: flex; align-items: center; gap: 12px; margin-left: 2px; letter-spacing: .8px; }
.find-toggle .chev { margin-bottom: 6px; }

.content { display: flex; height: 502px; }
.editor { display: grid; width: 718px; background: #c8c8c8; }
.editor > * { grid-area: 1 / 1; }
.ruler-num { font-size: 25px; fill: #444; text-anchor: middle; letter-spacing: 0; }
.lorem { margin: 0; padding: 55px 0 0 102px; white-space: nowrap; letter-spacing: .59px; }
.form { flex: 1; display: grid; grid-template: 52px 52px 56px 52px 52px 56px 56px / 249px 350px; column-gap: 31px; align-items: center; padding-top: 35px; background: #e7d8b6; }
.label { text-align: right; }
.wide { letter-spacing: 1.15px; }
.app { letter-spacing: .7px; padding-right: 1px; }
.narrow { letter-spacing: .27px; }
.locale { letter-spacing: 0; }
.check { display: flex; align-items: center; gap: 10px; padding-left: 8px; letter-spacing: .3px; }
.box { width: 28px; height: 28px; margin-bottom: 2px; border: 1px solid #6f6955; border-radius: 6px; background: linear-gradient(#ddd1b1, #d4caa6); }
.box.on { border-color: #b08051; background: linear-gradient(#e9cb88, #d9b377); }
.box svg { width: 28px; height: 30px; margin: -3px 0 0 -1px; }
.button { justify-content: center; padding: 0 7px 0 8px; }

.status { display: flex; align-items: center; justify-content: flex-end; height: 62px; padding-right: 11px; letter-spacing: .58px; color: #bfc2c0; }
.dark-strip { display: flex; height: 40px; margin-left: 12px; gap: 1px; }
.dark-strip span { display: flex; align-items: center; justify-content: center; width: 47px; padding: 0 0 1px; background: #3a3936; border: 1px solid #565550; }
.dark-strip .selected { width: 46px; padding-right: 1px; background: #5d3b2c; border-color: #7f6052; border-radius: 6px 0 0 6px; }
.dark-strip span:last-child { border-radius: 0 6px 6px 0; }
```
